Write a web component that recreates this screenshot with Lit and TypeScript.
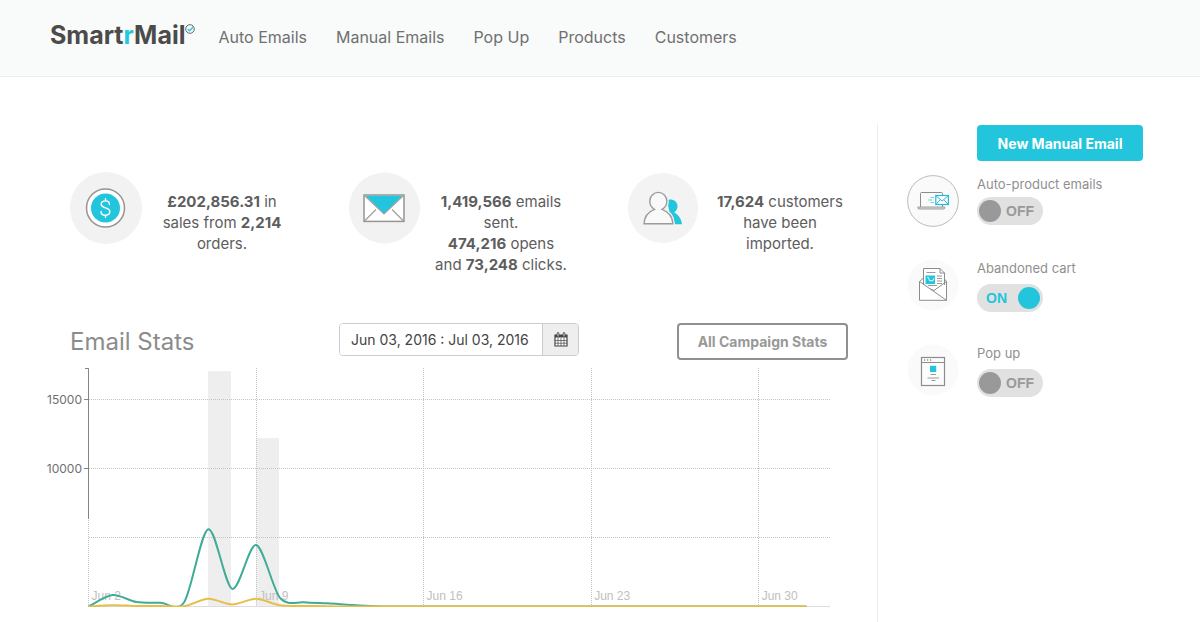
import { LitElement, html, css, svg } from "lit";
import { customElement, property, state } from "lit/decorators.js";
import { classMap } from "lit/directives/class-map.js";

type Point = [number, number];

const DAY_WIDTH = 23.93;
const ORIGIN_X = 48.6;
const BASELINE = 242.5;
const UNIT = 0.0138;

const px = (day: number) => ORIGIN_X + day * DAY_WIDTH;
const py = (value: number) => BASELINE - value * UNIT;

/* Cardinal spline through the given values, one per day. */
function spline(values: number[], tension = 0.15): string {
  const pts: Point[] = values.map((v, i) => [px(i), py(v)]);
  const at = (i: number) => pts[Math.max(0, Math.min(pts.length - 1, i))];
  const tangent = (i: number): Point => [
    tension * (at(i + 1)[0] - at(i - 1)[0]),
    tension * (at(i + 1)[1] - at(i - 1)[1]),
  ];
  let d = `M${pts[0][0]},${pts[0][1]}`;
  for (let i = 0; i < pts.length - 1; i++) {
    const a = pts[i];
    const b = pts[i + 1];
    const ta = tangent(i);
    const tb = tangent(i + 1);
    d += `C${a[0] + ta[0]},${a[1] + ta[1]} ${b[0] - tb[0]},${b[1] - tb[1]} ${b[0]},${b[1]}`;
  }
  return d;
}

const zeros = (n: number) => new Array(n).fill(0);

@customElement("stats-chart")
export class StatsChart extends LitElement {
  static styles = css`
    :host { display: block; }
    .chart { display: block; width: 100%; height: auto; }
    .bar { fill: #eeeeee; }
    .grid { stroke: #c4c4c4; stroke-width: 1; stroke-dasharray: 1 1; fill: none; }
    .base { stroke: #dcdcdc; stroke-width: 1; }
    .axis { stroke: #858585; stroke-width: 1; fill: none; }
    .value { font: 12px Inter, "Open Sans", sans-serif; fill: #6f6f6f; text-anchor: end; }
    .day { font: 12px "Liberation Sans", Arial, sans-serif; fill: #c0c0c0; }
    .line { fill: none; stroke-width: 2; stroke-linejoin: round; }
    .opens { stroke: #40ab97; }
    .clicks { stroke: #e9bd4c; }
  `;

  private bars = [
    { day: 5, value: 17050 },
    { day: 7, value: 12200 },
  ];
  private days = [
    { day: 0, label: "Jun 2" },
    { day: 7, label: "Jun 9" },
    { day: 14, label: "Jun 16" },
    { day: 21, label: "Jun 23" },
    { day: 28, label: "Jun 30" },
  ];
  private opens = [0, 830, 320, 270, 330, 5600, 1280, 4450, 620, 300, 230, 100, 20, ...zeros(18)];
  private clicks = [0, 90, 40, 40, 20, 560, 150, 560, 90, 40, 20, ...zeros(20)];

  render() {
    return html`
      <svg class="chart" viewBox="0 0 808 250" role="img" aria-label="Email stats by day">
        <defs><clipPath id="plot"><rect x="40" y="0" width="760" height="243"></rect></clipPath></defs>
        ${this.bars.map((b) => svg`<rect class="bar" x=${Math.floor(px(b.day))} y=${py(b.value)} width="23" height=${b.value * UNIT}></rect>`)}
        ${[5000, 10000, 15000].map((v) => svg`<path class="grid" d=${`M49,${py(v)}H790`}></path>`)}
        ${this.days.map((d) => svg`
          <path class="grid" d=${`M${Math.floor(px(d.day)) + 0.5},4V${BASELINE}`}></path>
          <text class="day" x=${px(d.day) + 3} y="236">${d.label}</text>`)}
        <path class="base" d="M49,242.5H790"></path>
        <path class="axis" d="M45,4.5H48.5V155"></path>
        ${[10000, 15000].map((v) => svg`
          <path class="axis" d=${`M44,${py(v)}H48`}></path>
          <text class="value" x="42" y=${py(v) + 4}>${v}</text>`)}
        <g clip-path="url(#plot)">
          <path class="line opens" d=${spline(this.opens)}></path>
          <path class="line clicks" d=${spline(this.clicks)}></path>
        </g>
      </svg>
    `;
  }
}

@customElement("feature-switch")
export class FeatureSwitch extends LitElement {
  @property() name = "";
  @property({ type: Boolean }) on = false;
  @property({ type: Boolean }) featured = false;

  static styles = css`
    :host { display: block; }
    .row { display: grid; grid-template-columns: 52px 1fr; column-gap: 18px; align-items: start; }
    .icon { display: block; width: 52px; height: 52px; }
    .body { display: flex; flex-direction: column; align-items: flex-start; gap: 7px; }
    .body.tight { gap: 4px; }
    .name { font-size: 13px; line-height: 18px; color: #8f8f8f; }
    .track {
      display: flex; align-items: center; justify-content: space-between;
      box-sizing: border-box; width: 66px; height: 28px; padding: 0 9px 0 2px;
      border-radius: 14px; background: #e1e1e1; color: #999999;
      font: bold 14px/28px "Liberation Sans", Arial, sans-serif; cursor: pointer;
    }
    .track.on { flex-direction: row-reverse; padding: 0 3px 0 9px; color: #22c5db; }
    .knob {
      appearance: none; margin: 0; width: 22px; height: 22px;
      border-radius: 50%; color: inherit; background: currentColor; cursor: pointer;
    }
  `;

  private toggle(e: Event) {
    this.on = (e.target as HTMLInputElement).checked;
  }

  render() {
    return html`
      <div class="row">
        <slot name="icon" class="icon"></slot>
        <div class=${classMap({ body: true, tight: this.featured })}>
          <label class="name" for="switch">${this.name}</label>
          <label class=${classMap({ track: true, on: this.on })}>
            <input id="switch" class="knob" type="checkbox" role="switch" .checked=${this.on} @change=${this.toggle} />
            <span>${this.on ? "ON" : "OFF"}</span>
          </label>
        </div>
      </div>
    `;
  }
}

@customElement("app-root")
export class AppRoot extends LitElement {
  @state() private range = "Jun 03, 2016 : Jul 03, 2016";

  static styles = css`
    :host {
      display: flex; flex-direction: column; min-height: 100vh;
      background: #ffffff; color: #5d5d5d;
      font-family: Inter, "Open Sans", sans-serif;
    }
    .top {
      display: flex; align-items: center; gap: 23px;
      box-sizing: border-box; height: 77px; padding: 0 50px 3px;
      background: #f9fafa; border-bottom: 1px solid #ebeeee;
    }
    .logo { display: flex; align-items: flex-start; padding-bottom: 4px; font-size: 25px; line-height: 28px; font-weight: 700; color: #4b4b4b; text-decoration: none; }
    .logo .accent { color: #25c8de; }
    .logo .mark { width: 10px; height: 10px; margin-top: 3px; }
    .nav { display: flex; gap: 29px; }
    .nav a { font-size: 16px; line-height: 20px; color: #707070; text-decoration: none; }

    .page { flex: 1; display: grid; grid-template-columns: 1fr 322px; padding-top: 47px; }
    .main { border-right: 1px solid #ededed; padding: 48px 29px 0 40px; }
    .stats { display: grid; grid-template-columns: repeat(3, 1fr); column-gap: 59px; padding-left: 30px; }
    .stat { display: grid; grid-template-columns: 72px 1fr; column-gap: 12px; }
    .stat .badge { width: 72px; height: 72px; }
    .stat p { justify-self: center; margin: 0; padding-top: 19px; font-size: 15px; line-height: 21px; text-align: center; white-space: nowrap; }
    .stat b { font-weight: 700; }

    .head { display: grid; grid-template-columns: 1fr auto 1fr; align-items: start; padding: 48px 0 0 30px; }
    .title { margin: 0; font-size: 24px; line-height: 37px; font-weight: 400; color: #8c8c8c; }
    .range { display: flex; box-sizing: border-box; width: 240px; height: 33px; border: 1px solid #cccccc; border-radius: 4px; overflow: hidden; }
    .range input { flex: 1; min-width: 0; margin: 0; padding: 0 11px; border: 0; background: #ffffff; font: 14px Inter, "Open Sans", sans-serif; color: #444444; }
    .range button { display: flex; align-items: center; justify-content: center; width: 36px; padding: 0; border: 0; border-left: 1px solid #cccccc; background: #eeeeee; color: #444444; cursor: pointer; }
    .all {
      justify-self: end; width: 171px; height: 37px; padding: 0; border: 2px solid #909090; border-radius: 4px;
      background: #ffffff; color: #999999; font: 700 14px Inter, "Open Sans", sans-serif; cursor: pointer;
    }
    .graph { margin-top: 4px; }

    .side { display: flex; flex-direction: column; padding: 1px 29px 0; }
    .new {
      align-self: flex-start; width: 166px; height: 36px; margin: 0 0 14px 70px; padding: 0; border: 0; border-radius: 4px;
      background: #22c5db; color: #ffffff; font: 700 14px Inter, "Open Sans", sans-serif; cursor: pointer;
    }
    .tools { display: flex; flex-direction: column; gap: 32px; }
    .tool-icon { display: block; width: 52px; height: 52px; }
  `;

  private coin() {
    return html`<svg class="badge" viewBox="0 0 72 72" aria-hidden="true">
      <circle cx="36" cy="36" r="36" fill="#f2f2f2" />
      <circle cx="35.5" cy="36" r="19" fill="#fff" stroke="#949494" stroke-width="1.5" />
      <circle cx="35.5" cy="36" r="14.5" fill="#22c5db" />
      <path d="M39.5 32.6c0-2.3-1.7-3.7-4.1-3.7s-4.2 1.3-4.2 3.4c0 4.6 8.6 2.6 8.6 7.3 0 2.2-1.8 3.6-4.3 3.6s-4.5-1.5-4.5-3.8M35.5 26.8v2.1M35.5 43.2v2.1" fill="none" stroke="#fff" stroke-width="1.4" stroke-linecap="round" />
    </svg>`;
  }

  private envelope() {
    return html`<svg class="badge" viewBox="0 0 72 72" aria-hidden="true">
      <circle cx="35.5" cy="36" r="35.5" fill="#f2f2f2" />
      <rect x="15" y="23" width="40" height="26.4" fill="#fff" stroke="#959595" stroke-width="1.5" />
      <path d="M16.5 23.8h37L35 42z" fill="#22c5db" />
      <path d="M15.500 23.500L35 42l19.500-18.500M15.500 49l11.500-11.500M54.500 49L43 37.500" fill="none" stroke="#a0a0a0" stroke-width="1.2" />
    </svg>`;
  }

  private people() {
    return html`<svg class="badge" viewBox="0 0 72 72" aria-hidden="true">
      <circle cx="35" cy="36" r="35" fill="#f3f3f3" />
      <path d="M39 28.200c5-2 10.500 1 10.500 6 0 3-1.600 5-3.500 6.200 4.500 2 7.500 6.500 8 11.800H44z" fill="#22c5db" />
      <path d="M16 51.800c.3-7 4-12 10.500-14.500-3-1.700-4.700-4.700-4.700-8.100 0-5 3.700-8.800 8.500-8.800s8.500 3.800 8.500 8.800c0 3.400-1.700 6.400-4.700 8.100 6.500 2.500 10.500 7.500 10.800 14.500z" fill="#f8f8f8" stroke="#f3f3f3" stroke-width="4" />
      <path d="M16 51.800c.3-7 4-12 10.500-14.500-3-1.700-4.700-4.700-4.700-8.100 0-5 3.700-8.800 8.500-8.800s8.500 3.800 8.500 8.800c0 3.400-1.700 6.400-4.700 8.100 6.500 2.500 10.500 7.500 10.800 14.500z" fill="#f9f9f9" stroke="#9c9c9c" stroke-width="1.400" />
    </svg>`;
  }

  private laptop() {
    return html`<svg slot="icon" class="tool-icon" viewBox="0 0 52 52" aria-hidden="true">
      <circle cx="26" cy="26" r="25.400" fill="#fafafa" stroke="#bcbcbc" stroke-width="1" />
      <path d="M13.500 32V18.500q0-1 1-1h20q1 0 1 1V20M35.500 29.500V32" fill="none" stroke="#8c8c8c" />
      <path d="M10.800 32h27v.8q0 1.200-1.300 1.200H12q-1.200 0-1.200-1.200z" fill="#ddd" stroke="#8c8c8c" stroke-width=".8" />
      <rect x="28.800" y="20.500" width="12.600" height="9" fill="#fff" stroke="#27b9d8" stroke-width="1.200" />
      <path d="M29 20.800l6.100 5.200 6.100-5.200M29 29.300l4.300-4.600M41.200 29.300l-4.300-4.600" fill="none" stroke="#27b9d8" />
      <path d="M23.500 22.500h3.500M21 25h4.500M23.500 27.500h3.500" stroke="#6fd3e4" />
    </svg>`;
  }

  private cart() {
    return html`<svg slot="icon" class="tool-icon" viewBox="0 0 52 52" aria-hidden="true">
      <circle cx="26" cy="26" r="25.500" fill="#fafafa" />
      <path d="M12.500 42V22l4-3.200V9.500h17.500l4.500 4.500v5.500l1.500 2.500v20z" fill="#fff" />
      <path d="M16.500 26V9.500H33l4.500 4.500v12M33 9.500V14h4.500" fill="none" stroke="#8c8c8c" />
      <path d="M16.500 19l-4 3.500v18.800h27V22.500l-2-2.500M12.500 22.500L39.500 41.300M39.500 22.500L27 31.500l-3.500-1.500" fill="none" stroke="#8c8c8c" />
      <path d="M19.500 13.500h9M30 17h5M30 19.500h5M30 22h5M30 24.500h5M21 26.500h9" stroke="#9a9a9a" />
      <rect x="18.500" y="16.500" width="9.500" height="8.500" fill="#22c5db" />
      <path d="M20.300 18.500h1.200l1 3.200h3.400l.8-2.400" fill="none" stroke="#fff" stroke-width=".9" />
    </svg>`;
  }

  private popup() {
    return html`<svg slot="icon" class="tool-icon" viewBox="0 0 52 52" aria-hidden="true">
      <circle cx="26" cy="26" r="25.500" fill="#fafafa" />
      <rect x="14.500" y="13.500" width="23" height="28" fill="#fcfcfc" stroke="#8c8c8c" stroke-width="1.200" />
      <path d="M14.500 18.500h23" stroke="#8c8c8c" />
      <path d="M17 16h1.200M20 16h1.200M23 16h1.200" stroke="#8c8c8c" stroke-width="1.400" />
      <rect x="23" y="21.800" width="6.200" height="6.200" fill="#22c5db" />
      <path d="M23.500 30.500h5.500M20.500 34h11.500M24.500 36.500h4" stroke="#9a9a9a" stroke-width="1.100" />
    </svg>`;
  }

  render() {
    return html`
      <header class="top">
        <a class="logo" href="#" aria-label="SmartrMail">
          <span>Smart<span class="accent">r</span>Mail</span>
          <svg class="mark" viewBox="0 0 10 10" aria-hidden="true">
            <circle cx="5" cy="5" r="4.300" fill="none" stroke="#666" stroke-width="1" />
            <path d="M2.800 5l1.700 1.700L8.500 2.500" fill="none" stroke="#25c8de" stroke-width="1.300" />
          </svg>
        </a>
        <nav class="nav">
          ${["Auto Emails", "Manual Emails", "Pop Up", "Products", "Customers"].map((t) => html`<a href="#">${t}</a>`)}
        </nav>
      </header>
      <div class="page">
        <main class="main">
          <section class="stats">
            <div class="stat">${this.coin()}<p><b>£202,856.31</b> in<br />sales from <b>2,214</b><br />orders.</p></div>
            <div class="stat">${this.envelope()}<p><b>1,419,566</b> emails<br />sent.<br /><b>474,216</b> opens<br />and <b>73,248</b> clicks.</p></div>
            <div class="stat">${this.people()}<p><b>17,624</b> customers<br />have been<br />imported.</p></div>
          </section>
          <section class="head">
            <h2 class="title">Email Stats</h2>
            <div class="range">
              <input type="text" aria-label="Date range" .value=${this.range} @change=${(e: Event) => (this.range = (e.target as HTMLInputElement).value)} />
              <button type="button" aria-label="Open calendar">
                <svg width="14" height="15" viewBox="0 0 14 15" aria-hidden="true">
                  <path d="M1 3h12v11H1z" fill="#fff" stroke="currentColor" stroke-width="1.200" />
                  <path d="M1 3h12v2.500H1z" fill="currentColor" />
                  <path d="M4 6v8M7 6v8M10 6v8M1 8.500h12M1 11.200h12" stroke="currentColor" stroke-width=".7" />
                  <path d="M4 1.500v2.500M10 1.500v2.500" stroke="currentColor" stroke-width="2.600" stroke-linecap="round" />
                  <path d="M4 1.500v2.500M10 1.500v2.500" stroke="#eee" stroke-width=".9" stroke-linecap="round" />
                </svg>
              </button>
            </div>
            <button class="all" type="button">All Campaign Stats</button>
          </section>
          <stats-chart class="graph"></stats-chart>
        </main>
        <aside class="side">
          <button class="new" type="button">New Manual Email</button>
          <div class="tools">
            <feature-switch name="Auto-product emails" featured>${this.laptop()}</feature-switch>
            <feature-switch name="Abandoned cart" on>${this.cart()}</feature-switch>
            <feature-switch name="Pop up">${this.popup()}</feature-switch>
          </div>
        </aside>
      </div>
    `;
  }
}
